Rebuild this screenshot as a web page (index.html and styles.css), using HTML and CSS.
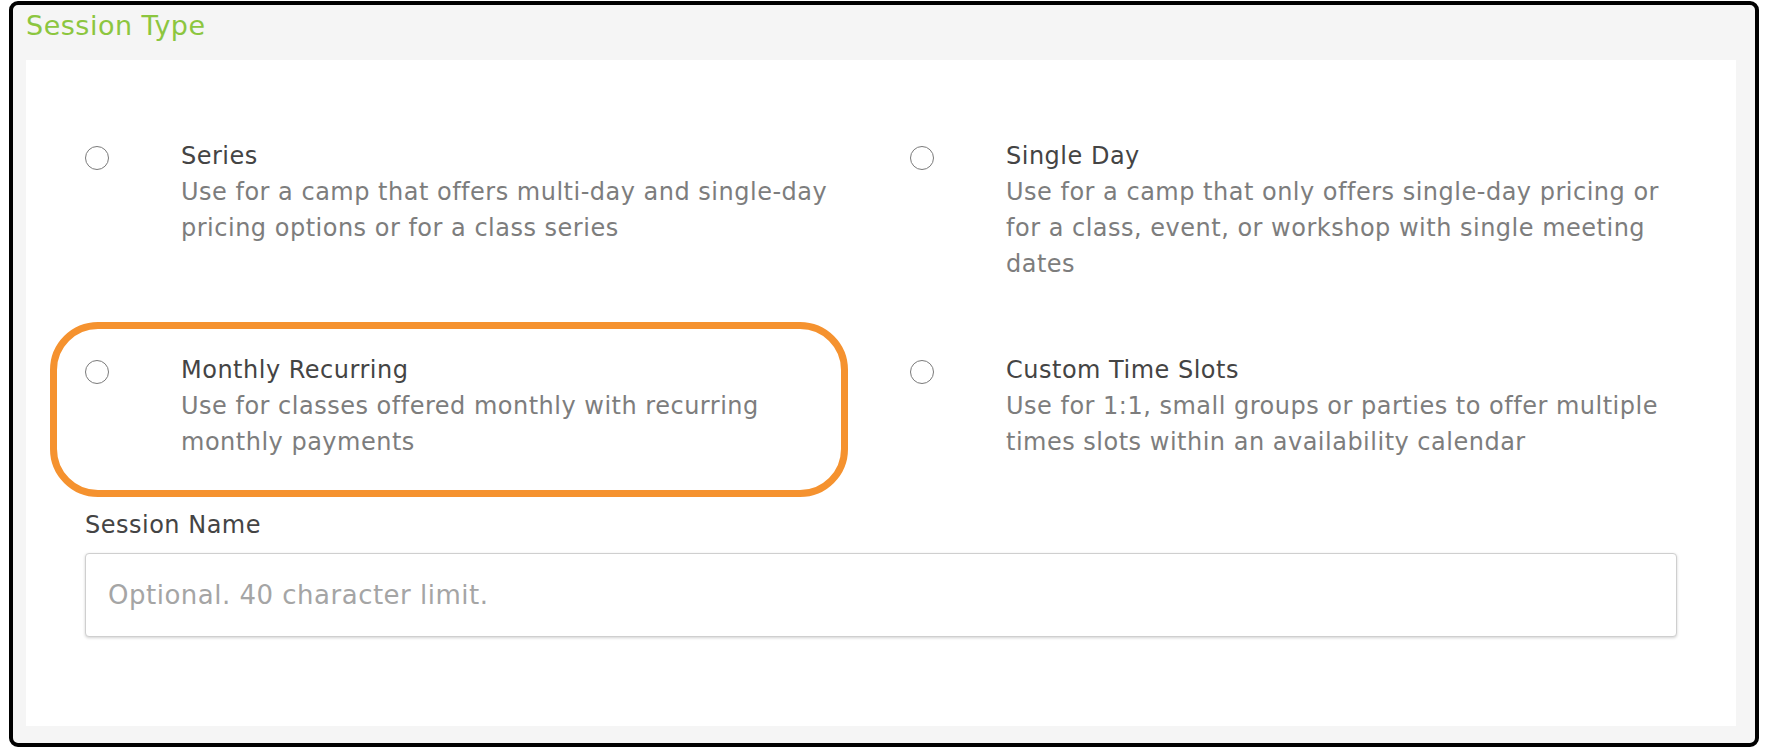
FILE: index.html
```html
<!DOCTYPE html>
<html lang="en">
<head>
<meta charset="utf-8">
<title>Session Type</title>
<link rel="stylesheet" href="styles.css">
</head>
<body>
<section class="frame">
  <h2 class="frame-title">Session Type</h2>
  <div class="panel">
    <div class="options">
      <label class="option">
        <input class="radio" type="radio" name="stype">
        <span class="option-text">
          <span class="option-title">Series</span>
          <span class="option-desc">Use for a camp that offers multi-day and single-day pricing options or for a class series</span>
        </span>
      </label>
      <label class="option">
        <input class="radio" type="radio" name="stype">
        <span class="option-text">
          <span class="option-title">Single Day</span>
          <span class="option-desc">Use for a camp that only offers single-day pricing or for a class, event, or workshop with single meeting dates</span>
        </span>
      </label>
      <label class="option option-highlight">
        <input class="radio" type="radio" name="stype">
        <span class="option-text">
          <span class="option-title">Monthly Recurring</span>
          <span class="option-desc">Use for classes offered monthly with recurring monthly payments</span>
        </span>
      </label>
      <label class="option">
        <input class="radio" type="radio" name="stype">
        <span class="option-text">
          <span class="option-title">Custom Time Slots</span>
          <span class="option-desc">Use for 1:1, small groups or parties to offer multiple times slots within an availability calendar</span>
        </span>
      </label>
    </div>
    <div class="field">
      <label class="field-label" for="sname">Session Name</label>
      <input class="field-input" id="sname" type="text" placeholder="Optional. 40 character limit.">
    </div>
  </div>
</section>
</body>
</html>
```

FILE: styles.css
```css
*, *::before, *::after { box-sizing: border-box; }

html, body {
  margin: 0;
  padding: 0;
  background: #ffffff;
}

body {
  font-family: "DejaVu Sans", "Liberation Sans", sans-serif;
  width: 1768px;
  height: 755px;
  overflow: hidden;
}

.frame {
  margin: 1px 9px 0 9px;
  height: 746px;
  border: 4px solid #000;
  border-radius: 9px;
  background: #f5f5f5;
  padding: 0 19px 17px 13px;
  display: flex;
  flex-direction: column;
}

.frame-title {
  margin: 0;
  padding: 0 0 13px 0;
  font-size: 27px;
  line-height: 42px;
  font-weight: normal;
  letter-spacing: 0.5px;
  color: #8cc63f;
}

.panel {
  flex: 1;
  background: #ffffff;
  padding: 78px 59px 89px 59px;
  display: flex;
  flex-direction: column;
}

.options {
  display: grid;
  grid-template-columns: 825px 1fr;
  row-gap: 70px;
}

.option {
  position: relative;
  display: flex;
  align-items: flex-start;
  gap: 72px;
  cursor: pointer;
}

.radio {
  appearance: none;
  -webkit-appearance: none;
  flex: none;
  width: 24px;
  height: 24px;
  margin: 8px 0 0 0;
  border: 1.6px solid #7a7a7a;
  border-radius: 50%;
  background: #fff;
}

.option-text {
  display: flex;
  flex-direction: column;
  width: 670px;
  font-size: 24px;
  line-height: 36px;
  letter-spacing: 0.5px;
}

.option-title {
  color: #444444;
}

.option-desc {
  color: #7d7d7d;
}

.option-highlight::after {
  content: "";
  position: absolute;
  top: -30px;
  left: -35px;
  width: 798px;
  height: 175px;
  border: 7px solid #f5922f;
  border-radius: 48px;
  pointer-events: none;
}

.field {
  margin-top: 47px;
  display: flex;
  flex-direction: column;
  gap: 10px;
}

.field-label {
  font-size: 24px;
  line-height: 36px;
  letter-spacing: 0.5px;
  color: #444444;
}

.field-input {
  width: 100%;
  height: 84px;
  border: 1px solid #cfcfcf;
  border-radius: 4px;
  box-shadow: 0 1px 3px rgba(0, 0, 0, 0.18);
  padding: 0 22px;
  font-family: "DejaVu Sans", "Liberation Sans", sans-serif;
  font-size: 26px;
  letter-spacing: 0.5px;
  color: #444444;
  background: #fff;
  outline: none;
}

.field-input::placeholder {
  color: #a5a5a5;
}
```
